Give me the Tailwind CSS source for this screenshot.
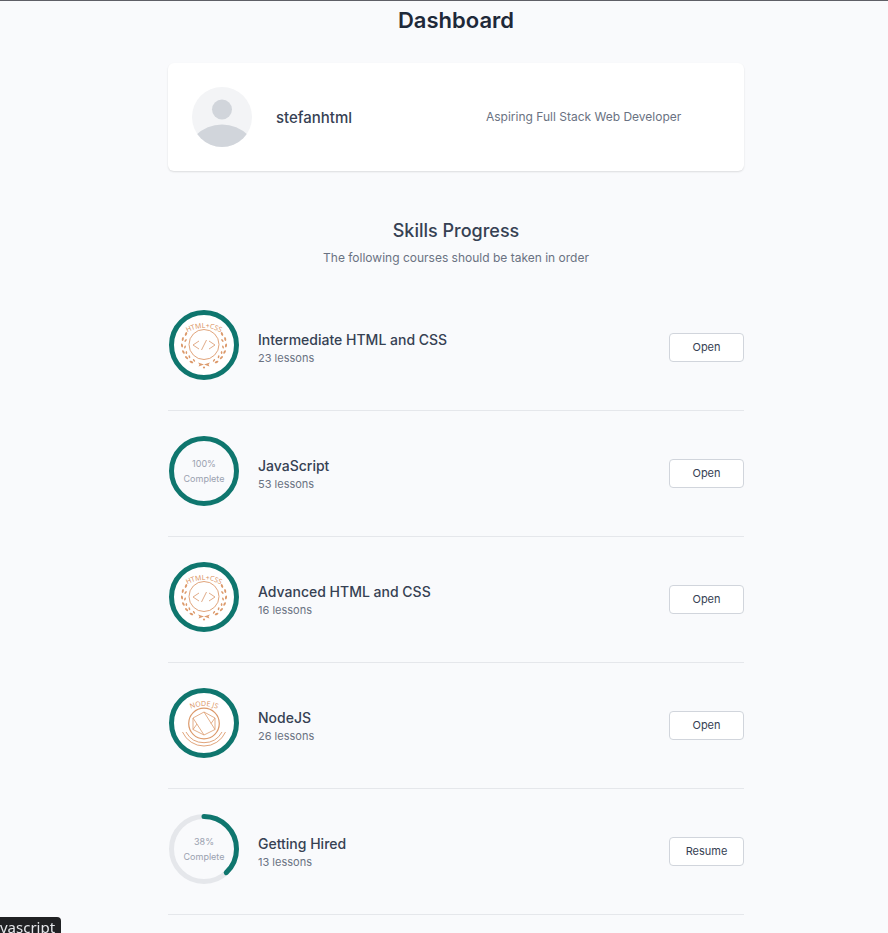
<!DOCTYPE html>
<html lang="en">
<head>
<meta charset="utf-8">
<meta name="viewport" content="width=device-width, initial-scale=1">
<title>Dashboard</title>
<script src="https://cdn.jsdelivr.net/npm/@tailwindcss/browser@4"></script>
</head>
<body class="min-h-screen border-t border-[#5f5f66] bg-[#f9fafc] pl-6 font-['Inter',sans-serif] text-gray-700">

<svg class="hidden" aria-hidden="true">
  <defs>
    <path id="arc" d="M15 26 Q36 12 57 26"/>
    <g id="leaves" fill="#dc9a6c">
      <ellipse cx="18" cy="25" rx="1" ry="2" transform="rotate(25 18 25)"/>
      <ellipse cx="14.8" cy="30" rx="1" ry="2" transform="rotate(12 14.8 30)"/>
      <ellipse cx="17.6" cy="31.500" rx=".8" ry="1.6" transform="rotate(40 17.6 31.500)"/>
      <ellipse cx="14" cy="36.500" rx="1" ry="2" transform="rotate(-10 14 36.500)"/>
      <ellipse cx="17" cy="38" rx=".8" ry="1.6" transform="rotate(20 17 38)"/>
      <ellipse cx="15.4" cy="43" rx="1" ry="2" transform="rotate(-30 15.4 43)"/>
      <ellipse cx="18.4" cy="43.500" rx=".8" ry="1.6"/>
      <ellipse cx="18.6" cy="48.600" rx="1" ry="2" transform="rotate(-45 18.6 48.600)"/>
      <ellipse cx="21.4" cy="47.800" rx=".8" ry="1.6" transform="rotate(-15 21.4 47.800)"/>
      <ellipse cx="23.4" cy="53" rx="1" ry="2" transform="rotate(-62 23.4 53)"/>
      <ellipse cx="26" cy="51.400" rx=".8" ry="1.6" transform="rotate(-35 26 51.400)"/>
      <path d="M30 53.6 36 55.600l-5.5 2 1-2.200z"/>
    </g>
    <g id="badge-html">
      <circle cx="36" cy="36" r="32.5" fill="#fff" stroke="#0f766e" stroke-width="5"/>
      <circle cx="36" cy="35.5" r="15" fill="none" stroke="#dc9a6c" stroke-width=".9"/>
      <path d="M31 32l-6 4 6 4M41 32l6 4-6 4M38.5 31l-5 10" fill="none" stroke="#dda27a" stroke-width=".9"/>
      <use href="#leaves"/>
      <use href="#leaves" transform="matrix(-1 0 0 1 72 0)"/>
      <circle cx="36" cy="58.500" r="1.100" fill="#dc9a6c"/>
    </g>
    <g id="badge-node">
      <circle cx="36" cy="36" r="32.5" fill="#fff" stroke="#0f766e" stroke-width="5"/>
      <g fill="none" stroke="#dc9a6c">
        <circle cx="36" cy="36.5" r="15.3" stroke-width="1.2"/>
        <path d="M36 25l11 6v11.500l-11 5.500-11-5.500V31zM36 25l11 17.500M25 31l11 17M25 42.500l4-5.500M47 31l-4 5.500" stroke-width=".8"/>
        <path d="M18 45a20.500 20.500 0 0 0 36 0M14.500 45a23.500 23.500 0 0 0 43 0" stroke-width=".9"/>
      </g>
    </g>
  </defs>
</svg>

<main class="mx-auto max-w-xl">
  <h1 class="pt-1 text-center text-[22px] leading-[30px] font-semibold text-gray-800">Dashboard</h1>

  <section class="mt-7 flex items-center gap-6 rounded-md bg-white p-6 shadow-[0_1px_2px_rgba(0,0,0,0.12)]">
    <svg class="size-[60px] shrink-0" viewBox="0 0 60 60" role="img" aria-label="Avatar">
      <clipPath id="round"><circle cx="30" cy="30" r="30"/></clipPath>
      <circle cx="30" cy="30" r="30" fill="#f3f4f6"/>
      <g fill="#d1d5db" clip-path="url(#round)"><circle cx="30" cy="22.5" r="10"/><circle cx="30" cy="74.5" r="37"/></g>
    </svg>
    <h2 class="w-1/3 pt-0.5 text-[15px] leading-5 font-medium">stefanhtml</h2>
    <p class="grow pl-2.5 text-xs text-gray-500">Aspiring Full Stack Web Developer</p>
  </section>

  <header class="pt-12 pb-4 text-center">
    <h2 class="text-lg leading-6 font-medium">Skills Progress</h2>
    <p class="mt-1 text-xs leading-[22px] text-gray-500">The following courses should be taken in order</p>
  </header>

  <ul>
    <li class="flex items-center border-b border-gray-200 py-6">
      <div class="pb-[5px]"><svg class="size-[72px]" viewBox="0 0 72 72" role="img" aria-label="HTML and CSS badge"><use href="#badge-html"/><text class="font-['Liberation_Sans_Narrow','Open_Sans',sans-serif]" font-size="7" fill="#d98f5c" text-anchor="middle"><textPath href="#arc" startOffset="50%">HTML+CSS</textPath></text></svg></div>
      <div class="grow pl-[18px]"><h3 class="text-sm leading-5 font-medium">Intermediate HTML and CSS</h3><p class="text-[11px] leading-4 text-gray-500">23 lessons</p></div>
      <button class="w-[75px] rounded border border-gray-300 bg-white text-[11px] leading-[27px]">Open</button>
    </li>
    <li class="flex items-center border-b border-gray-200 py-6">
      <div class="pb-[5px]"><div class="grid size-[72px] place-items-center"><svg class="col-start-1 row-start-1 size-[72px]" viewBox="0 0 72 72" aria-hidden="true"><circle cx="36" cy="36" r="32.5" fill="none" stroke="#0f766e" stroke-width="5"/></svg><p class="col-start-1 row-start-1 text-center text-[9px] leading-[15px] text-gray-400">100%<br>Complete</p></div></div>
      <div class="grow pl-[18px]"><h3 class="text-sm leading-5 font-medium">JavaScript</h3><p class="text-[11px] leading-4 text-gray-500">53 lessons</p></div>
      <button class="w-[75px] rounded border border-gray-300 bg-white text-[11px] leading-[27px]">Open</button>
    </li>
    <li class="flex items-center border-b border-gray-200 py-6">
      <div class="pb-[5px]"><svg class="size-[72px]" viewBox="0 0 72 72" role="img" aria-label="HTML and CSS badge"><use href="#badge-html"/><text class="font-['Liberation_Sans_Narrow','Open_Sans',sans-serif]" font-size="7" fill="#d98f5c" text-anchor="middle"><textPath href="#arc" startOffset="50%">HTML+CSS</textPath></text></svg></div>
      <div class="grow pl-[18px]"><h3 class="text-sm leading-5 font-medium">Advanced HTML and CSS</h3><p class="text-[11px] leading-4 text-gray-500">16 lessons</p></div>
      <button class="w-[75px] rounded border border-gray-300 bg-white text-[11px] leading-[27px]">Open</button>
    </li>
    <li class="flex items-center border-b border-gray-200 py-6">
      <div class="pb-[5px]"><svg class="size-[72px]" viewBox="0 0 72 72" role="img" aria-label="NodeJS badge"><use href="#badge-node"/><text class="font-['Liberation_Sans_Narrow','Open_Sans',sans-serif]" font-size="7" fill="#d98f5c" text-anchor="middle"><textPath href="#arc" startOffset="50%">NODE JS</textPath></text></svg></div>
      <div class="grow pl-[18px]"><h3 class="text-sm leading-5 font-medium">NodeJS</h3><p class="text-[11px] leading-4 text-gray-500">26 lessons</p></div>
      <button class="w-[75px] rounded border border-gray-300 bg-white text-[11px] leading-[27px]">Open</button>
    </li>
    <li class="flex items-center border-b border-gray-200 py-6">
      <div class="pb-[5px]"><div class="grid size-[72px] place-items-center"><svg class="col-start-1 row-start-1 size-[72px]" viewBox="0 0 72 72" fill="none" stroke-width="5" aria-hidden="true"><circle cx="36" cy="36" r="32.5" stroke="#e5e7eb"/><circle cx="36" cy="36" r="32.5" stroke="#0f766e" stroke-linecap="round" pathLength="100" stroke-dasharray="38 100" transform="rotate(-90 36 36)"/></svg><p class="col-start-1 row-start-1 text-center text-[9px] leading-[15px] text-gray-400">38%<br>Complete</p></div></div>
      <div class="grow pl-[18px]"><h3 class="text-sm leading-5 font-medium">Getting Hired</h3><p class="text-[11px] leading-4 text-gray-500">13 lessons</p></div>
      <button class="w-[75px] rounded border border-gray-300 bg-white text-[11px] leading-[27px]">Resume</button>
    </li>
  </ul>
</main>

<div class="fixed bottom-0 left-0 h-4 rounded-tr bg-[#202124] pr-1.5 font-['Noto_Sans',sans-serif] text-[15px] leading-5 text-gray-200">vascript</div>
</body>
</html>
